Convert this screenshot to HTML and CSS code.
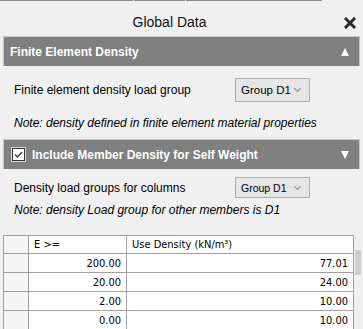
FILE: index.html
```html
<!DOCTYPE html>
<html lang="en">
<head>
  <meta charset="UTF-8">
  <title>Global Data</title>
  <link rel="stylesheet" href="styles.css">
</head>
<body>
  <div class="panel">
    <div class="tabline">
      <span class="seg seg1"></span><span class="seg seg2"></span><span class="seg seg3"></span>
    </div>

    <div class="title-row">
      <span class="title">Global Data</span>
      <svg class="close" width="12" height="12" viewBox="0 0 12 12">
        <path d="M2 2 L10 10 M10 2 L2 10" stroke="#2b2b2b" stroke-width="3" stroke-linecap="square"/>
      </svg>
    </div>

    <div class="bar">
      <span class="bar-title">Finite Element Density</span>
      <span class="tri tri-up"></span>
    </div>

    <div class="field-row first">
      <label class="field-label">Finite element density load group</label>
      <div class="select">Group D1<span class="chev"></span></div>
    </div>
    <p class="note">Note: density defined in finite element material properties</p>

    <div class="bar bar2">
      <span class="check">
        <svg width="11" height="11" viewBox="0 0 11 11">
          <path d="M2 5.5 L4.5 8 L9 3" fill="none" stroke="#333" stroke-width="1.3"/>
        </svg>
      </span>
      <span class="bar-title">Include Member Density for Self Weight</span>
      <span class="tri tri-down"></span>
    </div>

    <div class="field-row second">
      <label class="field-label">Density load groups for columns</label>
      <div class="select small">Group D1<span class="chev"></span></div>
    </div>
    <p class="note note2">Note: density Load group for other members is D1</p>

    <div class="grid-wrap">
      <table class="grid">
        <tr class="head">
          <td class="rh"></td>
          <td class="c1">E &gt;=</td>
          <td class="c2">Use Density (kN/m³)</td>
        </tr>
        <tr><td class="rh"></td><td class="num">200.00</td><td class="num">77.01</td></tr>
        <tr><td class="rh"></td><td class="num">20.00</td><td class="num">24.00</td></tr>
        <tr><td class="rh"></td><td class="num">2.00</td><td class="num">10.00</td></tr>
        <tr><td class="rh"></td><td class="num">0.00</td><td class="num">10.00</td></tr>
      </table>
      <div class="scrollbar"><div class="thumb"></div></div>
    </div>
    <div class="grid-bottom"></div>
  </div>
</body>
</html>
```

FILE: styles.css
```css
body {
  margin: 0;
  background-color: #f0f0f0;
  font-family: "Liberation Sans", Arial, sans-serif;
  font-size: 12px;
  color: #000;
}

.panel {
  width: 363px;
  height: 329px;
  overflow: hidden;
}

.tabline {
  display: flex;
  height: 1px;
}
.seg {
  height: 1px;
  background: #8c8c8c;
}
.seg1 { width: 133px; }
.seg2 { width: 51px; margin-left: 1px; }
.seg3 { width: 136px; margin-left: 1px; }

.title-row {
  position: relative;
  height: 35px;
  padding-right: 24px;
  text-align: center;
}
.title {
  display: inline-block;
  padding-top: 12px;
  font-size: 14px;
  line-height: 18px;
  color: #111;
}
.close {
  position: absolute;
  right: 7px;
  top: 16px;
}

.bar {
  display: flex;
  align-items: center;
  margin: 0 3px;
  height: 29px;
  padding: 0 10px 0 6px;
  background: #808080;
  border: 1px solid #c9c9c9;
  border-bottom: none;
  color: #fff;
}
.bar-title {
  flex: 1;
  font-weight: bold;
  font-size: 12px;
}
.tri {
  width: 0;
  height: 0;
  border-left: 4px solid transparent;
  border-right: 4px solid transparent;
}
.tri-up { border-bottom: 8px solid #fff; }
.tri-down { border-top: 8px solid #fff; }

.bar2 {
  margin-top: 7px;
  padding-left: 8px;
}
.check {
  display: flex;
  align-items: center;
  justify-content: center;
  width: 11px;
  height: 11px;
  margin-right: 7px;
  background: #fff;
  border: 1px solid #333;
  outline: 1px solid #d8d8d8;
}

.field-row {
  display: flex;
  align-items: center;
  padding-left: 14px;
}
.field-row.first { margin-top: 12px; }
.field-row.second { margin-top: 8px; }
.field-label {
  width: 221px;
}
.select {
  display: flex;
  align-items: center;
  box-sizing: border-box;
  width: 75px;
  height: 24px;
  padding-left: 5px;
  background: #e5e5e5;
  border: 1px solid #adadad;
  font-size: 11.5px;
}
.select.small {
  height: 21px;
  font-size: 10.5px;
}
.chev {
  width: 4px;
  height: 4px;
  margin-left: auto;
  margin-right: 9px;
  margin-top: -3px;
  border-right: 1px solid #888;
  border-bottom: 1px solid #888;
  transform: rotate(45deg);
}

.note {
  margin: 13px 0 0 14px;
  font-style: italic;
  line-height: 17px;
}
.note2 { margin-top: 4px; }

.grid-wrap {
  display: flex;
  margin: 16px 0 0 3px;
}
.grid {
  width: 352px;
  border-collapse: collapse;
  font-family: "DejaVu Sans Condensed", "DejaVu Sans", sans-serif;
  font-size: 11px;
}
.grid td {
  height: 18px;
  padding: 0 5px;
  border: 1px solid #a0a0a0;
  background: #fff;
}
.grid .head td {
  height: 17px;
  background: #fff;
}
.grid td.rh {
  width: 14px;
  background: #f5f5f5;
  border-left: 1px solid #a0a0a0;
}
.grid td.c1 {
  width: 87px;
}
.num {
  text-align: right;
}
.scrollbar {
  width: 8px;
  margin-left: 1px;
  padding-top: 15px;
}
.thumb {
  width: 6px;
  height: 25px;
  background: #cdcdcd;
}
.grid-bottom {
  height: 3px;
  background: #6e6e6e;
}
```
